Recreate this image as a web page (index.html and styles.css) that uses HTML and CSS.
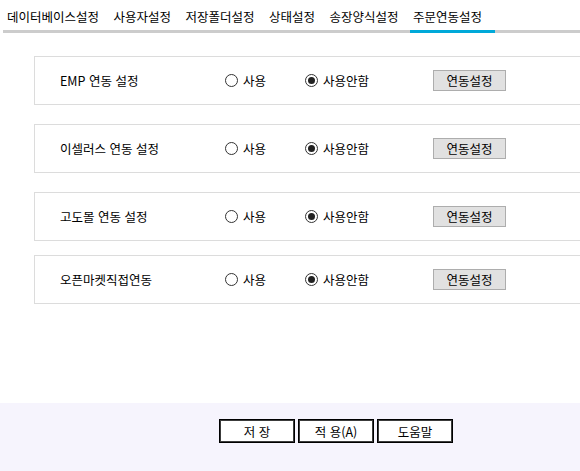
FILE: index.html
```html
<!DOCTYPE html>
<html lang="ko">
<head>
    <meta charset="UTF-8">
    <meta name="viewport" content="width=device-width, initial-scale=1.0">
    <title>주문연동설정</title>
    <link rel="stylesheet" href="styles.css">
</head>
<body>
    <div class="page">
        <ul class="tabs">
            <li class="tab">데이터베이스설정</li>
            <li class="tab">사용자설정</li>
            <li class="tab">저장폴더설정</li>
            <li class="tab">상태설정</li>
            <li class="tab">송장양식설정</li>
            <li class="tab active">주문연동설정</li>
        </ul>

        <div class="content">
            <div class="setting">
                <span class="setting-name">EMP 연동 설정</span>
                <label class="radio radio-use"><input type="radio" name="emp"> 사용</label>
                <label class="radio radio-off"><input type="radio" name="emp" checked> 사용안함</label>
                <button class="link-btn">연동설정</button>
            </div>
            <div class="setting">
                <span class="setting-name">이셀러스 연동 설정</span>
                <label class="radio radio-use"><input type="radio" name="esellers"> 사용</label>
                <label class="radio radio-off"><input type="radio" name="esellers" checked> 사용안함</label>
                <button class="link-btn">연동설정</button>
            </div>
            <div class="setting">
                <span class="setting-name">고도몰 연동 설정</span>
                <label class="radio radio-use"><input type="radio" name="godo"> 사용</label>
                <label class="radio radio-off"><input type="radio" name="godo" checked> 사용안함</label>
                <button class="link-btn">연동설정</button>
            </div>
            <div class="setting setting-last">
                <span class="setting-name">오픈마켓직접연동</span>
                <label class="radio radio-use"><input type="radio" name="open"> 사용</label>
                <label class="radio radio-off"><input type="radio" name="open" checked> 사용안함</label>
                <button class="link-btn">연동설정</button>
            </div>
        </div>

        <div class="footer">
            <button class="footer-btn">저 장</button>
            <button class="footer-btn">적 용(A)</button>
            <button class="footer-btn">도움말</button>
        </div>
    </div>
</body>
</html>
```

FILE: styles.css
```css
html, body {
    margin: 0;
    padding: 0;
    background-color: #fff;
    overflow: hidden;
}
body {
    font-family: "Noto Sans CJK KR", "Noto Sans", sans-serif;
    font-size: 12.5px;
    color: #000;
}
.page {
    display: flex;
    flex-direction: column;
    width: 580px;
    height: 471px;
    overflow: hidden;
}

/* tabs */
.tabs {
    display: flex;
    list-style: none;
    margin: 0 0 0 3px;
    padding: 0 0 0 1px;
    border-bottom: 3px solid #cccccc;
    white-space: nowrap;
}
.tab {
    padding: 9px 11.5px 6px 3px;
    line-height: 15px;
    margin-bottom: -3px;
    border-bottom: 3px solid transparent;
}
.tab.active {
    padding-right: 13px;
    border-bottom-color: #00a9d9;
}

/* settings */
.content {
    flex: 1;
    padding-top: 23px;
}
.setting {
    display: flex;
    align-items: center;
    width: 520px;
    height: 47px;
    margin: 0 0 19px 34px;
    padding-left: 25px;
    border: 1px solid #dcdcdc;
    border-right: none;
    box-sizing: content-box;
}
.setting-last {
    margin-top: -5px;
}
.setting-name {
    width: 165px;
}
.radio {
    display: flex;
    align-items: center;
    gap: 5px;
}
.radio-use {
    width: 80px;
}
.radio-off {
    width: 128px;
}
.radio input {
    appearance: none;
    -webkit-appearance: none;
    margin: 0;
    width: 13px;
    height: 13px;
    border: 1px solid #333;
    border-radius: 50%;
    box-sizing: border-box;
    display: flex;
    align-items: center;
    justify-content: center;
}
.radio input:checked::after {
    content: "";
    width: 7px;
    height: 7px;
    border-radius: 50%;
    background-color: #222;
}
.link-btn {
    width: 73px;
    height: 21px;
    padding: 0;
    font-family: inherit;
    font-size: 12.5px;
    color: #000;
    background-color: #e1e1e1;
    border: 1px solid #adadad;
}

/* footer */
.footer {
    display: flex;
    gap: 3px;
    height: 68px;
    padding: 16px 0 0 219px;
    box-sizing: border-box;
    background-color: #f6f4fd;
}
.footer-btn {
    width: 76px;
    height: 24px;
    padding: 0;
    font-family: inherit;
    font-size: 12.5px;
    color: #000;
    background-color: #fff;
    border: 1px solid #000;
    box-shadow: inset 0 0 0 1px #3c3c3c;
}
```
